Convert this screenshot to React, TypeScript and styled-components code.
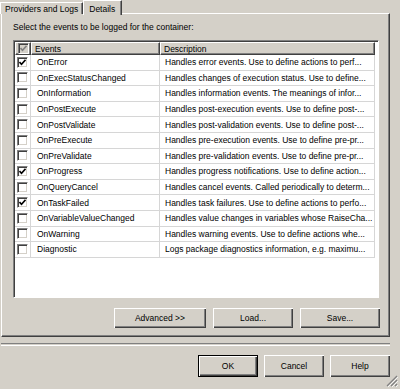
import styled, { createGlobalStyle } from 'styled-components'

const GlobalStyle = createGlobalStyle`
  html, body {
    margin: 0;
    padding: 0;
    background: #d4d0c8;
    font-family: "Liberation Sans", Arial, sans-serif;
    font-size: 8.5px;
    color: #000;
  }
`

const Window = styled.div`
  position: relative;
  width: 400px;
  height: 389px;
  box-sizing: border-box;
  padding: 0 10px 0 1px;
  display: flex;
  flex-direction: column;
  background: #d4d0c8;
  overflow: hidden;
`

const TabStrip = styled.div`
  display: flex;
  align-items: flex-end;
  height: 14px;
  margin-bottom: -1px;
  position: relative;
  z-index: 1;
`

const Tab = styled.div<{ $active?: boolean }>`
  box-sizing: border-box;
  height: ${(p) => (p.$active ? '15px' : '12px')};
  margin-left: ${(p) => (p.$active ? '0' : '-1px')};
  margin-bottom: ${(p) => (p.$active ? '0' : '1px')};
  padding: ${(p) => (p.$active ? '1px 6px 0 5px' : '0 4px 0 4px')};
  display: flex;
  align-items: center;
  background: #d4d0c8;
  border-top: 1px solid #fff;
  border-left: 1px solid #fff;
  border-right: 1px solid #404040;
  box-shadow: inset -1px 0 #808080;
  white-space: nowrap;
  align-self: flex-start;
  margin-top: ${(p) => (p.$active ? '0' : '2px')};
`

const Panel = styled.div`
  box-sizing: border-box;
  height: 324px;
  display: flex;
  flex-direction: column;
  padding: 8px 10px 7px 11px;
  border-top: 1px solid #fff;
  border-left: 1px solid #fff;
  border-right: 1px solid #404040;
  border-bottom: 1px solid #404040;
  box-shadow: inset -1px -1px #808080;
`

const Label = styled.div`
  height: 11px;
  line-height: 11px;
  margin-bottom: 7px;
`

const ListBox = styled.div`
  box-sizing: border-box;
  height: 258px;
  background: #fff;
  border-top: 1px solid #808080;
  border-left: 1px solid #808080;
  border-right: 1px solid #fff;
  border-bottom: 1px solid #fff;
  box-shadow: inset 1px 1px #404040;
  padding: 1px 0 0 1px;
  display: flex;
  flex-direction: column;
  overflow: hidden;
`

const HeaderRow = styled.div`
  display: flex;
  height: 13px;
  flex: none;
`

const HeaderCell = styled.div<{ $w: number }>`
  box-sizing: border-box;
  width: ${(p) => p.$w}px;
  flex: none;
  height: 13px;
  background: #d4d0c8;
  display: flex;
  align-items: center;
  padding-left: 3px;
  border-top: 1px solid #fff;
  border-left: 1px solid #fff;
  border-right: 1px solid #404040;
  border-bottom: 1px solid #404040;
  box-shadow: inset -1px -1px #808080;
`

const Row = styled.div`
  display: flex;
  height: 15.6px;
  flex: none;
`

const Cell = styled.div<{ $w: number; $pad?: number }>`
  box-sizing: border-box;
  width: ${(p) => p.$w}px;
  flex: none;
  display: flex;
  align-items: center;
  padding-left: ${(p) => p.$pad ?? 0}px;
  border-right: 1px solid #d6d6d6;
  border-bottom: 1px solid #d6d6d6;
  white-space: nowrap;
  overflow: hidden;
`

const Box = styled.div<{ $disabled?: boolean }>`
  box-sizing: border-box;
  width: 11px;
  height: 11px;
  margin-left: 2px;
  background: ${(p) => (p.$disabled ? '#d4d0c8' : '#fff')};
  border-top: 1px solid #808080;
  border-left: 1px solid #808080;
  border-right: 1px solid #fff;
  border-bottom: 1px solid #fff;
  box-shadow: inset 1px 1px #404040, inset -1px -1px #d4d0c8;
  display: flex;
  align-items: center;
  justify-content: center;
`

const ButtonRow = styled.div`
  display: flex;
  justify-content: flex-end;
  gap: 7px;
  margin-top: 10px;
  margin-right: -1px;
`

const Button = styled.div<{ $w: number; $h?: number; $default?: boolean }>`
  box-sizing: border-box;
  width: ${(p) => p.$w}px;
  height: ${(p) => p.$h ?? 20}px;
  display: flex;
  align-items: center;
  justify-content: center;
  background: #d4d0c8;
  border: ${(p) => (p.$default ? '1px solid #000' : 'none')};
  box-shadow: inset 1px 1px #fff, inset -1px -1px #404040, inset -2px -2px #808080;
`

const Separator = styled.div`
  margin-top: 6px;
  height: 1px;
  border-top: 1px solid #808080;
  border-bottom: 1px solid #fff;
`

const Footer = styled.div`
  display: flex;
  justify-content: flex-end;
  gap: 6px;
  margin-top: 9px;
`

const Grip = styled.svg`
  position: absolute;
  right: 2px;
  bottom: 2px;
`

type EventRow = {
  name: string
  desc: string
  checked?: boolean
}

const rows: EventRow[] = [
  { name: 'OnError', desc: 'Handles error events. Use to define actions to perf...', checked: true },
  { name: 'OnExecStatusChanged', desc: 'Handles changes of execution status. Use to define...' },
  { name: 'OnInformation', desc: 'Handles information events. The meanings of infor...' },
  { name: 'OnPostExecute', desc: 'Handles post-execution events. Use to define post-...' },
  { name: 'OnPostValidate', desc: 'Handles post-validation events. Use to define post-...' },
  { name: 'OnPreExecute', desc: 'Handles pre-execution events. Use to define pre-pr...' },
  { name: 'OnPreValidate', desc: 'Handles pre-validation events. Use to define pre-pr...' },
  { name: 'OnProgress', desc: 'Handles progress notifications. Use to define action...', checked: true },
  { name: 'OnQueryCancel', desc: 'Handles cancel events. Called periodically to determ...' },
  { name: 'OnTaskFailed', desc: 'Handles task failures. Use to define actions to perfo...', checked: true },
  { name: 'OnVariableValueChanged', desc: 'Handles value changes in variables whose RaiseCha...' },
  { name: 'OnWarning', desc: 'Handles warning events. Use to define actions whe...' },
  { name: 'Diagnostic', desc: 'Logs package diagnostics information, e.g. maximu...' },
]

function Check({ color = '#000' }: { color?: string }) {
  return (
    <svg width="7" height="7" viewBox="0 0 7 7">
      <path d="M0.5 3 L2.5 5.2 L6.5 0.8" fill="none" stroke={color} strokeWidth="1.6" />
    </svg>
  )
}

function CheckBox({ checked, disabled }: { checked?: boolean; disabled?: boolean }) {
  return (
    <Box $disabled={disabled}>{checked && <Check color={disabled ? '#808080' : '#000'} />}</Box>
  )
}

export default function App() {
  return (
    <>
      <GlobalStyle />
      <Window>
        <TabStrip>
          <Tab>Providers and Logs</Tab>
          <Tab $active>Details</Tab>
        </TabStrip>
        <Panel>
          <Label>Select the events to be logged for the container:</Label>
          <ListBox>
            <HeaderRow>
              <HeaderCell $w={16} style={{ paddingLeft: 0 }}>
                <CheckBox checked disabled />
              </HeaderCell>
              <HeaderCell $w={129}>Events</HeaderCell>
              <HeaderCell $w={215}>Description</HeaderCell>
            </HeaderRow>
            {rows.map((r) => (
              <Row key={r.name}>
                <Cell $w={16}>
                  <CheckBox checked={r.checked} />
                </Cell>
                <Cell $w={129} $pad={6}>
                  {r.name}
                </Cell>
                <Cell $w={215} $pad={5}>
                  {r.desc}
                </Cell>
              </Row>
            ))}
          </ListBox>
          <ButtonRow>
            <Button $w={92}>Advanced &gt;&gt;</Button>
            <Button $w={80}>Load...</Button>
            <Button $w={80}>Save...</Button>
          </ButtonRow>
        </Panel>
        <Separator />
        <Footer>
          <Button $w={60} $h={22} $default>
            OK
          </Button>
          <Button $w={60} $h={22}>
            Cancel
          </Button>
          <Button $w={60} $h={22}>
            Help
          </Button>
        </Footer>
        <Grip width="12" height="12" viewBox="0 0 12 12">
          <path d="M11 1 L1 11 M11 5 L5 11 M11 9 L9 11" stroke="#808080" strokeWidth="1.2" />
          <path d="M12 2 L2 12 M12 6 L6 12 M12 10 L10 12" stroke="#fff" strokeWidth="0.8" />
        </Grip>
      </Window>
    </>
  )
}
